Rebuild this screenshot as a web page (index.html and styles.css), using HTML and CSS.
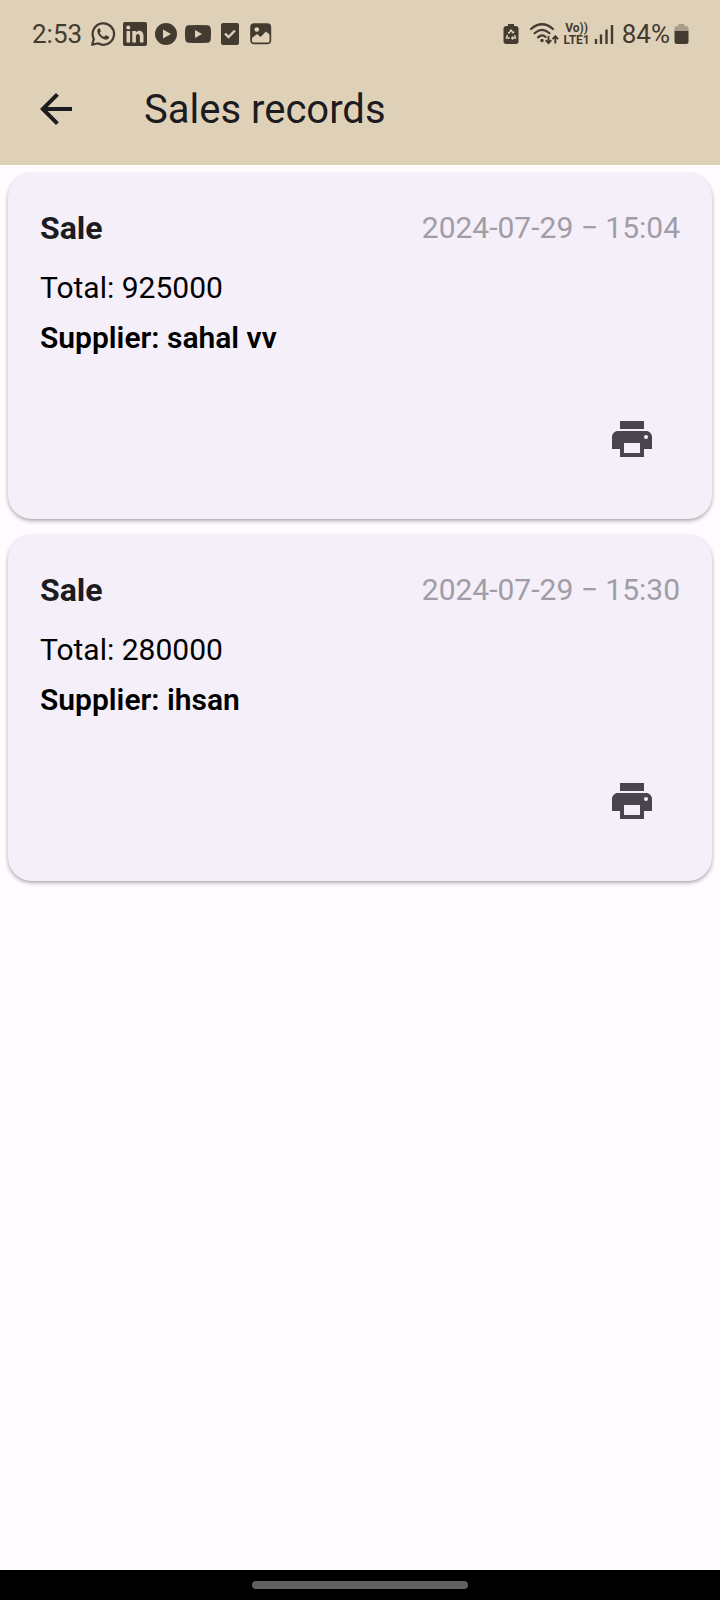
FILE: index.html
```html
<!DOCTYPE html>
<html lang="en">
<head>
<meta charset="utf-8">
<meta name="viewport" content="width=device-width, initial-scale=1">
<title>Sales records</title>
<link rel="stylesheet" href="styles.css">
</head>
<body>
<div class="screen">
  <header class="top">
    <div class="status">
      <div class="status-left">
        <span class="clock">2:53</span>
        <svg width="26" height="26" viewBox="0 0 26 26" aria-hidden="true"><path d="M2.2 23.8l1.6-5.9A10.7 10.7 0 1 1 8 22.3z" fill="none" stroke="currentColor" stroke-width="2.2" stroke-linejoin="round"/><path d="M9.2 7.2c-.6 0-1.9.9-1.9 2.8 0 3.800 4.900 8.600 8.800 8.600 2 0 3-1.300 3-2.400 0-.5-.2-.7-3.200-2-.8-.2-1.100 1.600-1.900 1.500-1.600-.4-3.700-2.400-4.300-4 .2-.7 1.300-1.100 1.100-1.800-.9-2.500-1-2.700-1.600-2.700z" fill="currentColor"/></svg>
        <svg width="26" height="26" viewBox="0 0 26 26" aria-hidden="true"><path fill="currentColor" fill-rule="evenodd" d="M3 1h20a2 2 0 0 1 2 2v20a2 2 0 0 1-2 2H3a2 2 0 0 1-2-2V3a2 2 0 0 1 2-2zM4.500 10v11.500h3.600V10zM6.300 4.400a2.100 2.100 0 1 0 0 4.200 2.100 2.100 0 0 0 0-4.200zM10.300 10v11.500h3.600v-6c0-3.400 4-3.300 4 0v6h3.600v-7c0-5.500-5.800-5.800-7.600-2.900V10z"/></svg>
        <svg width="24" height="26" viewBox="0 0 24 26" aria-hidden="true"><path fill="currentColor" fill-rule="evenodd" d="M12 2a11 11 0 1 0 0 22 11 11 0 0 0 0-22zM9 8.500l8 4.500-8 4.500z"/></svg>
        <svg width="28" height="26" viewBox="0 0 28 26" aria-hidden="true"><path fill="currentColor" fill-rule="evenodd" d="M4.500 4.300q9.500-.8 19 0Q26.500 4.500 26.800 8q.5 5 0 10-.3 3.500-3.300 3.700-9.500.8-19 0Q1.500 21.500 1.200 18q-.5-5 0-10 .3-3.500 3.300-3.700zM11 9v8l7-4z"/></svg>
        <svg width="24" height="26" viewBox="0 0 24 26" aria-hidden="true"><rect x="3" y="2" width="18" height="22" rx="2" fill="currentColor"/><path d="M7 12.500l3.500 3.500L17 9.500" class="cut-line"/></svg>
        <svg width="26" height="26" viewBox="0 0 26 26" aria-hidden="true"><rect x="3.200" y="3.200" width="19" height="19" rx="3" fill="currentColor" stroke="currentColor" stroke-width="2"/><path class="cut" d="M4 20v-3l5-4 3.500 3 5.500-5.500 3.500 3V20q0 1.500-1.500 1.500H5.500Q4 21.500 4 20z"/><circle class="cut" cx="8.800" cy="8.500" r="2.300"/></svg>
      </div>
      <div class="status-right">
        <svg width="16" height="24" viewBox="0 0 16 24" aria-hidden="true"><path fill="currentColor" d="M5 2h6v2h1.500Q15.500 4 15.500 6.500v13q0 2.500-3 2.500h-9Q.5 22 .5 19.500v-13Q.5 4 3.500 4H5z"/><path class="cut-thin" d="M6 11l2-3 2 3M4.500 13L3.500 16h3.300M11.500 13l1 3H9M5 10.800l1.600.2M11 9.500l-.8 1.700M9.800 14.500L8.800 16l1 1.500"/></svg>
        <svg class="wifi" width="30" height="24" viewBox="0 0 30 24" aria-hidden="true"><g fill="none" stroke="currentColor" stroke-width="2.200" stroke-linecap="round"><path d="M2 7Q13 -2.500 24 7"/><path d="M5.500 11.300Q13 4.500 20.500 11.300"/><path d="M9 15.300q4-3.500 7.500-.5"/></g><circle cx="13" cy="18.500" r="1.700" fill="currentColor"/><path d="M19.500 14v7M16.700 18.200l2.800 3 2.800-3M26.300 21.500v-7M23.500 17.200l2.800-3 2.800 3" fill="none" stroke="currentColor" stroke-width="1.900"/></svg>
        <span class="network"><span>Vo))</span><span>LTE1</span></span>
        <svg class="signal" width="20" height="20" viewBox="0 0 20 20" aria-hidden="true"><path d="M2 15v5M7 10.500V20M12.500 5.500V20M18 1v19" stroke="currentColor" stroke-width="2.400"/></svg>
        <span class="percent">84%</span>
        <svg width="15" height="22" viewBox="0 0 15 22" aria-hidden="true"><path d="M4.500 1h6v2H12q2.500 0 2.500 2.500V8H.5V5.500Q.5 3 3 3h1.500z" fill="#a99d8a"/><path d="M.5 8h14v10.500q0 2.500-2.500 2.500H3Q.5 21 .5 18.500z" fill="currentColor"/></svg>
      </div>
    </div>
    <div class="toolbar">
      <button class="back" type="button" aria-label="Back"><svg width="48" height="48" viewBox="0 0 24 24"><path fill="currentColor" d="M20 11H7.830l5.590-5.590L12 4l-8 8 8 8 1.410-1.410L7.830 13H20z"/></svg></button>
      <h1 class="title">Sales records</h1>
    </div>
  </header>
  <main class="records">
    <article class="card">
      <div class="card-head"><h2 class="kind">Sale</h2><time class="date" datetime="2024-07-29T15:04">2024-07-29 − 15:04</time></div>
      <p class="total">Total: 925000</p>
      <p class="supplier">Supplier: sahal vv</p>
      <button class="print" type="button" aria-label="Print"><svg width="48" height="48" viewBox="0 0 24 24"><path fill="currentColor" fill-rule="evenodd" d="M19 8H5c-1.660 0-3 1.340-3 3v6h4v4h12v-4h4v-6c0-1.660-1.340-3-3-3zm-3 11H8v-5h8zm3-7a1 1 0 1 1 0-2 1 1 0 0 1 0 2zM18 3H6v4h12z"/></svg></button>
    </article>
    <article class="card">
      <div class="card-head"><h2 class="kind">Sale</h2><time class="date" datetime="2024-07-29T15:30">2024-07-29 − 15:30</time></div>
      <p class="total">Total: 280000</p>
      <p class="supplier">Supplier: ihsan</p>
      <button class="print" type="button" aria-label="Print"><svg width="48" height="48" viewBox="0 0 24 24"><path fill="currentColor" fill-rule="evenodd" d="M19 8H5c-1.660 0-3 1.340-3 3v6h4v4h12v-4h4v-6c0-1.660-1.340-3-3-3zm-3 11H8v-5h8zm3-7a1 1 0 1 1 0-2 1 1 0 0 1 0 2zM18 3H6v4h12z"/></svg></button>
    </article>
  </main>
  <footer class="navbar"><span class="handle"></span></footer>
</div>
</body>
</html>
```
FILE: styles.css
```css
* { box-sizing: border-box; }
body {
  margin: 0;
  font-family: Roboto, "Liberation Sans", sans-serif;
  background: #fffbff;
  color: #1c1b1f;
}
h1, h2, p { margin: 0; }
svg { display: block; flex: none; }
button {
  padding: 0;
  border: 0;
  background: none;
  color: inherit;
  cursor: pointer;
}
.screen {
  display: flex;
  flex-direction: column;
  min-height: 100vh;
}
.top { background: #dfd1b7; }
.status {
  display: flex;
  justify-content: space-between;
  align-items: center;
  height: 53px;
  padding: 15px 31px 0 32px;
  color: #433b30;
  font-size: 26px;
  line-height: 32px;
}
.status-left, .status-right {
  display: flex;
  align-items: center;
}
.status-left { gap: 6px; }
.status-right { gap: 4px; }
.clock { margin-right: 2px; }
.wifi { margin-left: 6px; }
.signal { margin-right: 4px; }
.network {
  display: flex;
  flex-direction: column;
  align-items: center;
  font-size: 12px;
  font-weight: 700;
  line-height: 12px;
}
.cut { fill: #dfd1b7; }
.cut-line, .cut-thin {
  fill: none;
  stroke: #dfd1b7;
  stroke-width: 2.4;
}
.cut-thin { stroke-width: 1.4; }
.toolbar {
  display: flex;
  align-items: center;
  height: 112px;
  padding: 0 32px;
  gap: 64px;
}
.title {
  padding-top: 2px;
  font-size: 40px;
  font-weight: 400;
  line-height: 48px;
}
.records {
  flex: 1;
  display: flex;
  flex-direction: column;
  gap: 16px;
  padding: 8px;
}
.card {
  display: flex;
  flex-direction: column;
  padding: 32px 32px 40px;
  border-radius: 24px;
  background: #f4eff9;
  box-shadow: 0 2px 4px rgba(0, 0, 0, 0.3), 0 1px 2px rgba(0, 0, 0, 0.06);
}
.card-head {
  display: flex;
  justify-content: space-between;
  align-items: center;
  margin-bottom: 12px;
}
.kind {
  font-size: 32px;
  font-weight: 700;
  line-height: 46px;
}
.date {
  font-size: 30px;
  line-height: 46px;
  color: #a19da6;
}
.total, .supplier {
  font-size: 30px;
  line-height: 50px;
  color: #000;
}
.supplier { font-weight: 600; }
.print {
  align-self: flex-end;
  margin: 36px 8px 0 0;
  padding: 16px;
  color: #49454f;
}
.navbar {
  display: flex;
  justify-content: center;
  align-items: center;
  height: 30px;
  background: #000;
}
.handle {
  width: 30%;
  height: 8px;
  border-radius: 4px;
  background: #606060;
}
```
